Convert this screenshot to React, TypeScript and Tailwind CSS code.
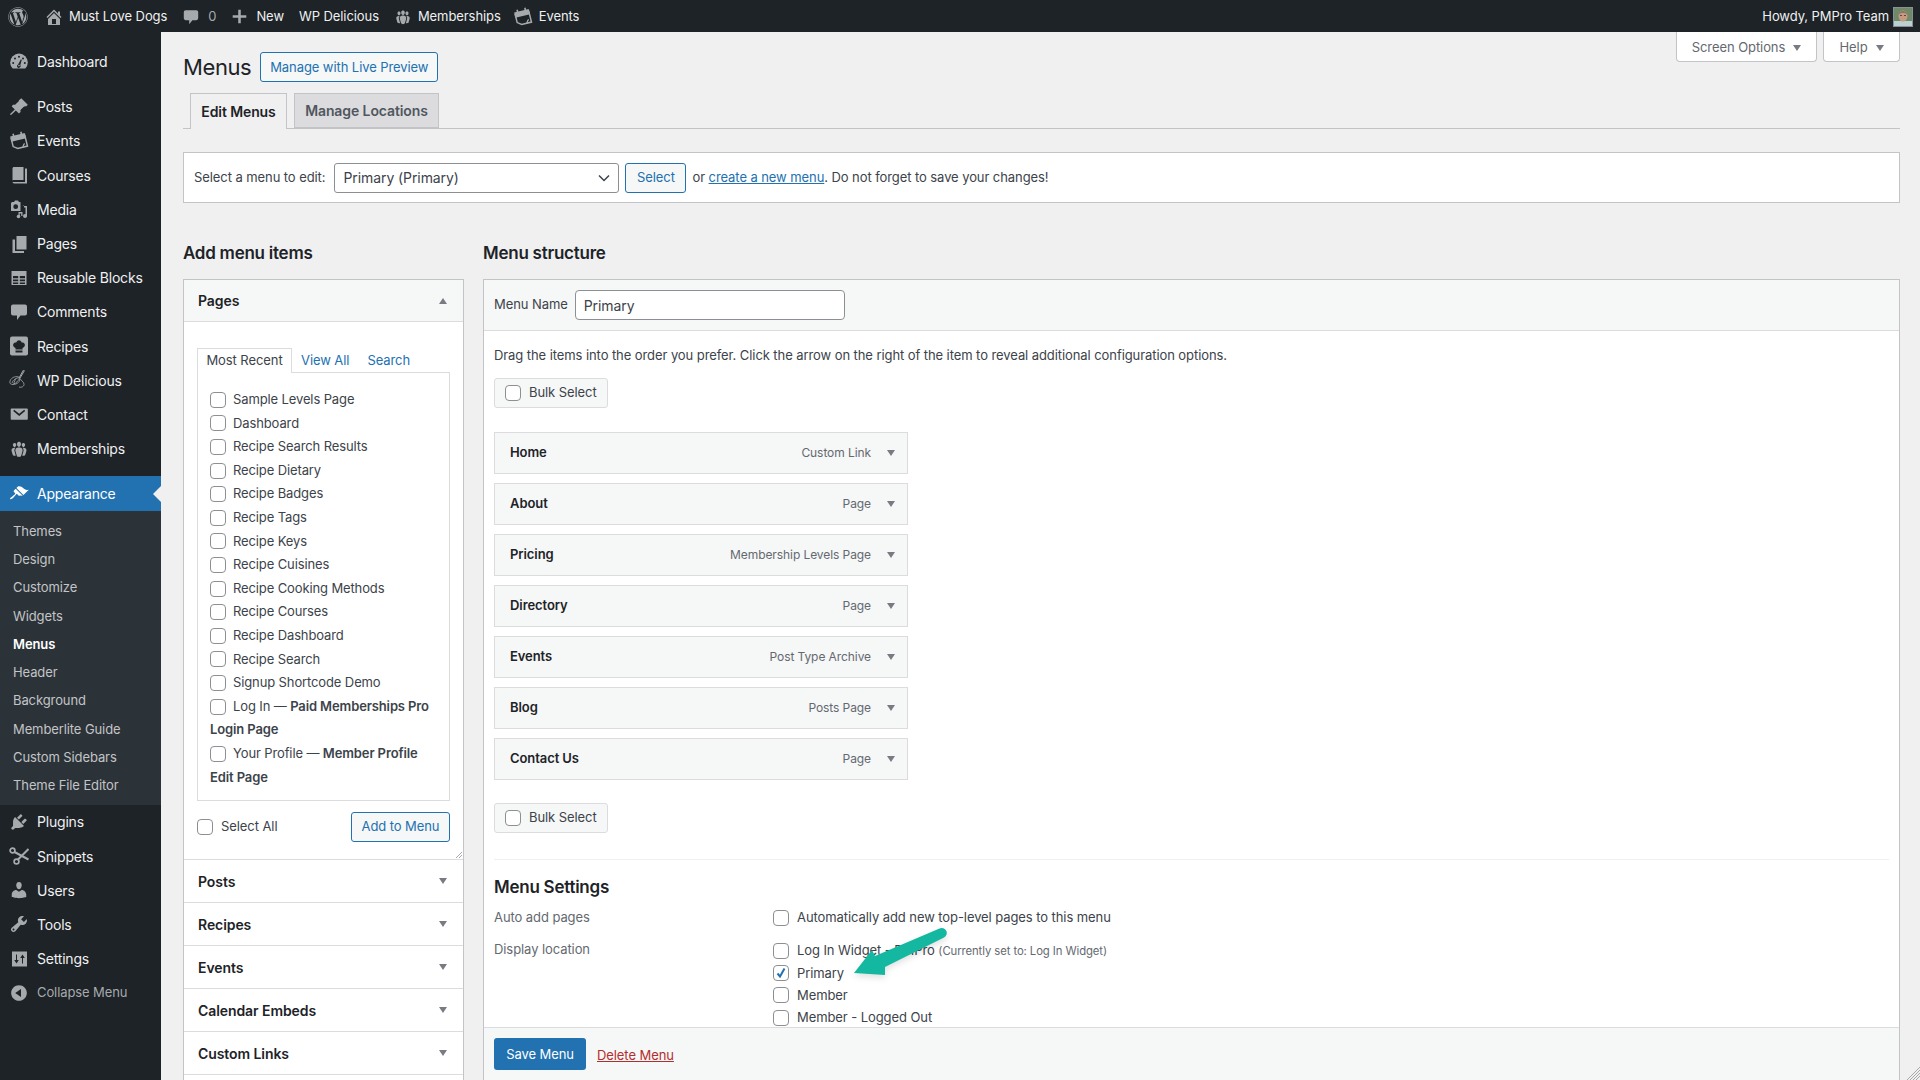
import type { ReactNode } from "react";
import { FaWordpress } from "react-icons/fa";

// dashicon-style paths, 20x20 box
const paths: Record<string, string> = {
  home: "M16 8.5l1.53 1.53-1.06 1.06L10 4.62l-6.47 6.47-1.06-1.06L10 2.5l4 4v-2h2v4zm-6-2.46l6 5.99V18H4v-5.97zM12 17v-5H8v5h4z",
  comment: "M4 2.5h12a2 2 0 0 1 2 2v7a2 2 0 0 1-2 2h-4.5L8 18v-4.5H4a2 2 0 0 1-2-2v-7a2 2 0 0 1 2-2z",
  plus: "M18 8.5v3h-6.5V18h-3v-6.5H2v-3h6.5V2h3v6.5z",
  post: "M10.44 3.02l1.82-1.82 6.54 6.53-1.82 1.82c-.68-.68-1.57-.43-2.17.16l-2.88 2.88c-.6.6-.84 1.49-.16 2.17l-1.82 1.82-3.16-3.16-4.42 4.42-1.25.26.26-1.25 4.42-4.42-3.16-3.16 1.82-1.82c.68.68 1.57.44 2.17-.16l2.88-2.88c.6-.6.84-1.49.16-2.17z",
  book: "M5 2h9.5v13H5c-.8 0-1.5.3-1.5.3V3.5C3.5 2.7 4.2 2 5 2zM16 3.5h2V18.5H5.5c-1 0-2-.8-2-1.6h12.5z",
  page: "M7.5 2h10v13.5h-10zM3.5 5.5h2.5v11.5h9v2H3.5z",
  table: "M2.5 3h15v14h-15zM4 8v2.2h5.2V8zm6.8 0v2.2H16V8zM4 11.4v1.9h5.2v-1.9zm6.8 0v1.9H16v-1.9zM4 14.4V16h5.2v-1.6zm6.8 0V16H16v-1.6z",
  mail: "M2.5 4.5h15.5c.5 0 .8.3.8.8v9.7c0 .5-.3.8-.8.8H2.5c-.5 0-.8-.3-.8-.8V5.3c0-.5.3-.8.8-.8zm1.7 2.4l6 5 6-5-1-1.1-5 4-5-4z",
  groups: "M8.03 4.46c-.29 1.28.55 3.46 1.97 3.46 1.41 0 2.25-2.18 1.96-3.46-.22-.98-1.08-1.63-1.96-1.63-.89 0-1.74.65-1.97 1.63zm-4.13.9c-.25 1.08.47 2.93 1.67 2.93s1.92-1.85 1.67-2.93c-.19-.83-.92-1.39-1.67-1.39s-1.48.56-1.67 1.39zm8.86 0c-.25 1.08.47 2.93 1.66 2.93 1.2 0 1.92-1.85 1.67-2.93-.19-.83-.92-1.39-1.67-1.39-.74 0-1.47.56-1.66 1.39zm-.59 11.43l1.25-4.3C14.2 10 12.71 8.47 10 8.47c-2.72 0-4.21 1.53-3.44 4.02l1.26 4.3C8.05 17.51 9 18 10 18c.98 0 1.94-.49 2.17-1.21zm-6.1-7.63c-.49.67-.96 1.83-.42 3.59l1.12 3.79c-.34.2-.77.31-1.2.31-.85 0-1.65-.41-1.85-1.03l-1.07-3.65c-.65-2.11.61-3.4 2.92-3.4.27 0 .54.02.79.06-.1.1-.2.22-.29.33zm8.35-.39c2.31 0 3.58 1.29 2.92 3.4l-1.07 3.65c-.2.62-1 1.03-1.85 1.03-.43 0-.86-.11-1.2-.31l1.11-3.77c.55-1.78.08-2.94-.42-3.61-.08-.11-.18-.23-.28-.33.25-.04.51-.06.79-.06z",
  brush: "M14.48 11.06L7.41 3.99l1.5-1.5c.5-.56 2.3-.47 3.51.32 1.21.8 1.43 1.28 2.91 2.1 1.18.64 2.45 1.26 4.45.85zm-.71.71L6.7 4.7 4.93 6.47c-.39.39-.39 1.02 0 1.41l1.06 1.06c.39.39.39 1.03 0 1.42-.6.6-1.43 1.11-2.21 1.69-.35.26-.7.53-1.01.84C1.43 13.23.76 14.77 1.2 15.2c.42.43 1.97-.24 3.32-1.59.31-.31.58-.66.84-1.01.58-.78 1.09-1.61 1.69-2.21.39-.39 1.03-.39 1.42 0l1.06 1.06c.39.39 1.02.39 1.41 0z",
  plugin: "M13.11 4.36L9.87 7.6 8 5.73l3.24-3.24c.35-.34 1.05-.2 1.56.32.52.51.66 1.21.31 1.55zm-8 1.77l.91-1.12 9.01 9.01-1.19.84c-.71.71-2.63 1.16-3.82 1.16H6.14L4.9 17.26c-.59.59-1.54.59-2.12 0-.59-.58-.59-1.53 0-2.12l1.24-1.24v-3.88c0-1.13.4-3.19 1.09-3.89zm7.26 3.97l3.24-3.24c.34-.35 1.04-.21 1.55.31.52.51.66 1.21.31 1.55l-3.24 3.25z",
  users: "M10 9.25c-2.27 0-2.73-3.44-2.73-3.44C7 4.02 7.82 2 9.97 2c2.16 0 2.98 2.02 2.71 3.81 0 0-.41 3.44-2.68 3.44zm0 2.57L12.72 10c2.39 0 4.52 2.33 4.52 4.53v2.49s-3.65 1.13-7.24 1.13c-3.65 0-7.24-1.13-7.24-1.13v-2.49c0-2.25 1.94-4.48 4.47-4.48z",
  tools: "M16.68 9.77c-1.34 1.34-3.3 1.67-4.95.99l-5.41 6.52c-.99.99-2.59.99-3.58 0s-.99-2.59 0-3.57l6.52-5.42c-.68-1.65-.35-3.61.99-4.95 1.28-1.28 3.12-1.62 4.72-1.06l-2.89 2.89 2.82 2.82 2.86-2.87c.53 1.58.18 3.39-1.08 4.65zM3.81 16.21c.4.39 1.04.39 1.43 0 .4-.4.4-1.04 0-1.43-.39-.4-1.03-.4-1.43 0-.39.39-.39 1.03 0 1.43z",
  settings: "M3 2.5h15v15H3zM8 11V5.5H7V11H5.2l2.3 3.5L9.8 11zM13.5 5.5L11.2 9H13v5.5h1V9h1.8z",
  collapse: "M10 2.16c4.33 0 7.84 3.51 7.84 7.84s-3.51 7.84-7.84 7.84S2.16 14.33 2.16 10 5.71 2.16 10 2.16zm2 11.72V6.12L6.18 9.97z",
};

function Dash({ name, size = 20 }: { name: string; size?: number }) {
  return (
    <svg width={size} height={size} viewBox="0 0 20 20" fill="currentColor" fillRule="evenodd">
      <path d={paths[name]} />
    </svg>
  );
}

function DashboardIcon() {
  return (
    <svg width="20" height="20" viewBox="0 0 20 20" fill="currentColor">
      <path d="M3.76 16.5h12.48A8.6 8.6 0 0 0 18.8 10.4a8.8 8.8 0 1 0-17.6 0c0 2.4 1 4.5 2.56 6.1z" />
      <g fill="#1d2327">
        <circle cx="4.2" cy="11" r="1" />
        <circle cx="6" cy="6.6" r="1" />
        <circle cx="10" cy="4.8" r="1" />
        <circle cx="14" cy="6.6" r="1" />
        <circle cx="15.8" cy="11" r="1" />
        <path d="M11.8 7.4l1 .4-1.5 5.2a1.8 1.8 0 1 1-2.2-.6z" />
      </g>
      <circle cx="10" cy="13.6" r=".8" />
    </svg>
  );
}

function EventsIcon() {
  return (
    <svg width="20" height="20" viewBox="0 0 20 20">
      <g transform="rotate(-14 10 10)">
        <path d="M3 6h14v11h-10l-4-3z" fill="none" stroke="currentColor" strokeWidth="1.5" />
        <path d="M2.5 3.5h15V9h-15z" fill="currentColor" />
        <path d="M6 1.5v3M14 1.5v3" stroke="currentColor" strokeWidth="1.6" />
        <path d="M12 17c1.5-1 1-3 3-3" stroke="currentColor" strokeWidth="1.3" fill="none" />
      </g>
    </svg>
  );
}

function MediaIcon() {
  return (
    <svg width="20" height="20" viewBox="0 0 20 20" fill="currentColor">
      <path fillRule="evenodd" d="M3 3h2l1-1.5h3L10 3h1.5v9H2V4zm3.7 2.3a2.4 2.4 0 1 0 0 4.8 2.4 2.4 0 0 0 0-4.800z" />
      <path d="M13 7h5v10.500h-1.500V8.500H15V6.500z" />
      <circle cx="16" cy="17" r="2" />
      <path d="M9.500 13h4v4h-1.300v-2.500h-1.500v3.500h-1.200z" />
      <circle cx="9.500" cy="17.500" r="1.800" />
    </svg>
  );
}

function RecipeIcon() {
  return (
    <svg width="20" height="20" viewBox="0 0 20 20">
      <rect x="1" y="0.500" width="18" height="19" rx="2" fill="currentColor" />
      <path d="M6.500 12c-2-.6-2.800-2.400-2.200-4 .5-1.300 1.800-1.800 3-1.500C7.800 5 9 4.300 10 4.300s2.200.7 2.700 2.200c1.200-.3 2.500.2 3 1.500.6 1.600-.2 3.400-2.200 4v1.500h-7z" fill="#1d2327" />
      <path d="M6.500 14.500h7V16.500h-7z" fill="#1d2327" />
    </svg>
  );
}

function WhiskIcon() {
  return (
    <svg width="22" height="22" viewBox="0 0 22 22" fill="none" stroke="currentColor" strokeWidth=".8">
      <path d="M16.500 1.500L12 9M15.500 1l-4.500 8" strokeWidth="1" />
      <path d="M11.500 8.500c-3-2-8-.5-9.500 3.500-.8 2.500.8 3.500 3 3.500 4 0 8-3 6.500-7z" />
      <path d="M11 9c-2-.5-6 1.500-7 5M11.500 9.500c-1 2-3.500 5-6 5.500M8 9.500c-1 1.500-2 3.500-2 5.500M12 9.500c1 2 3.500 3 4 5.500 .3 2-2 4-5 3" />
    </svg>
  );
}

function ScissorsIcon() {
  return (
    <svg width="20" height="20" viewBox="0 0 20 20" fill="none" stroke="currentColor">
      <circle cx="3.500" cy="4.500" r="2.400" strokeWidth="1.700" />
      <circle cx="7.500" cy="15.500" r="2.400" strokeWidth="1.700" />
      <path d="M5.500 6l14 7.500M9 13.500L19.500 3" strokeWidth="2" />
    </svg>
  );
}

function AvatarImage() {
  return (
    <svg width="18" height="18" viewBox="0 0 18 18">
      <rect width="18" height="18" fill="#6f8a68" />
      <rect y="13" width="18" height="5" fill="#bcd0d4" />
      <ellipse cx="9" cy="8" rx="4.500" ry="5.500" fill="#c59a80" />
      <path d="M4.500 7c.5-3 2.500-4 4.500-4s4 1 4.500 4c-1-1.500-2-2-4.500-2s-3.500.5-4.500 2z" fill="#8b7463" />
      <rect x="6" y="7" width="2" height="1" fill="#5b4a42" />
      <rect x="10" y="7" width="2" height="1" fill="#5b4a42" />
    </svg>
  );
}

function Caret({ up = false, className = "" }: { up?: boolean; className?: string }) {
  return (
    <svg width="8" height="6" viewBox="0 0 8 6" fill="currentColor" className={className}>
      <path d={up ? "M0 6L4 0l4 6z" : "M0 0h8L4 6z"} />
    </svg>
  );
}

function Check({ checked = false }: { checked?: boolean }) {
  return (
    <span className="flex h-4 w-4 shrink-0 items-center justify-center rounded-[4px] border border-[#8c8f94] bg-white">
      {checked && (
        <svg width="12" height="12" viewBox="0 0 12 12" fill="none" stroke="#2271b1" strokeWidth="2">
          <path d="M2.500 6.500L5 9.500l4.500-8" />
        </svg>
      )}
    </span>
  );
}

const topNav: { label: string; icon: ReactNode }[] = [
  { label: "Posts", icon: <Dash name="post" /> },
  { label: "Events", icon: <EventsIcon /> },
  { label: "Courses", icon: <Dash name="book" /> },
  { label: "Media", icon: <MediaIcon /> },
  { label: "Pages", icon: <Dash name="page" /> },
  { label: "Reusable Blocks", icon: <Dash name="table" /> },
  { label: "Comments", icon: <Dash name="comment" /> },
  { label: "Recipes", icon: <RecipeIcon /> },
  { label: "WP Delicious", icon: <WhiskIcon /> },
  { label: "Contact", icon: <Dash name="mail" /> },
  { label: "Memberships", icon: <Dash name="groups" /> },
];

const subNav = [
  "Themes",
  "Design",
  "Customize",
  "Widgets",
  "Menus",
  "Header",
  "Background",
  "Memberlite Guide",
  "Custom Sidebars",
  "Theme File Editor",
];

const bottomNav: { label: string; icon: ReactNode }[] = [
  { label: "Plugins", icon: <Dash name="plugin" /> },
  { label: "Snippets", icon: <ScissorsIcon /> },
  { label: "Users", icon: <Dash name="users" /> },
  { label: "Tools", icon: <Dash name="tools" /> },
  { label: "Settings", icon: <Dash name="settings" /> },
];

const pageRows = [
  "Sample Levels Page",
  "Dashboard",
  "Recipe Search Results",
  "Recipe Dietary",
  "Recipe Badges",
  "Recipe Tags",
  "Recipe Keys",
  "Recipe Cuisines",
  "Recipe Cooking Methods",
  "Recipe Courses",
  "Recipe Dashboard",
  "Recipe Search",
  "Signup Shortcode Demo",
];

const menuItems = [
  ["Home", "Custom Link"],
  ["About", "Page"],
  ["Pricing", "Membership Levels Page"],
  ["Directory", "Page"],
  ["Events", "Post Type Archive"],
  ["Blog", "Posts Page"],
  ["Contact Us", "Page"],
];

const closedBoxes = ["Posts", "Recipes", "Events", "Calendar Embeds", "Custom Links"];

function NavRow({ label, icon }: { label: string; icon: ReactNode }) {
  return (
    <div className="flex h-[34.2px] items-center pb-[1px] text-[14px] tracking-[-0.2px] text-[#f0f0f1]">
      <span className="flex w-[37px] items-center justify-center pl-[1px] text-[#a7aaad]">{icon}</span>
      {label}
    </div>
  );
}

function BulkSelect() {
  return (
    <div className="flex h-[30px] w-[114px] items-center gap-[8px] rounded-[3px] border border-[#dcdcde] bg-[#f6f7f7] pl-[10px] text-[13px]">
      <Check />
      Bulk Select
    </div>
  );
}

export default function App() {
  return (
    <div className="relative flex h-[1080px] w-[1920px] flex-col overflow-hidden bg-[#f0f0f1] text-[13px] tracking-[-0.08px] text-[#3c434a] [font-family:Inter,sans-serif]">
      {/* admin bar */}
      <div className="flex h-8 shrink-0 items-center bg-[#1d2327] pt-[1px] text-[13px] text-[#f0f0f1]">
        <span className="ml-[8px] text-[#a7aaad]">
          <FaWordpress size={20} />
        </span>
        <span className="ml-[16px] text-[#a7aaad]">
          <Dash name="home" />
        </span>
        <span className="ml-[5px]">Must Love Dogs</span>
        <span className="ml-[15px] text-[#a7aaad]">
          <Dash name="comment" size={18} />
        </span>
        <span className="ml-[8px] text-[#a7aaad]">0</span>
        <span className="ml-[15px] text-[#a7aaad]">
          <Dash name="plus" size={17} />
        </span>
        <span className="ml-[8px]">New</span>
        <span className="ml-[15px]">WP Delicious</span>
        <span className="ml-[15px] text-[#a7aaad]">
          <Dash name="groups" size={18} />
        </span>
        <span className="ml-[6px]">Memberships</span>
        <span className="ml-[12px] text-[#a7aaad]">
          <EventsIcon />
        </span>
        <span className="ml-[6px]">Events</span>
        <span className="ml-auto">Howdy, PMPro Team</span>
        <span className="ml-[4px] mr-[7px] border border-[#8c8f94]">
          <AvatarImage />
        </span>
      </div>

      <div className="flex min-h-0 flex-1">
        {/* sidebar */}
        <div className="w-[161px] shrink-0 bg-[#1d2327] pt-[13px]">
          <NavRow label="Dashboard" icon={<DashboardIcon />} />
          <div className="h-[11px]" />
          {topNav.map((item) => (
            <NavRow key={item.label} label={item.label} icon={item.icon} />
          ))}
          <div className="relative mt-[10px] flex h-[35px] items-center bg-[#2271b1] text-[14px] tracking-[-0.2px] text-white">
            <span className="flex w-[37px] items-center justify-center pl-[1px]">
              <Dash name="brush" />
            </span>
            Appearance
            <span className="absolute right-0 top-[10px] h-0 w-0 border-y-[8px] border-r-[8px] border-y-transparent border-r-[#f0f0f1]" />
          </div>
          <div className="h-[294px] bg-[#2c3338] pt-[6px] text-[13px] tracking-[-0.1px] text-[#c3c4c7]">
            {subNav.map((label) => (
              <div
                key={label}
                className={`flex h-[28.3px] items-center pl-[13px] ${label === "Menus" ? "font-semibold text-white" : ""}`}
              >
                {label}
              </div>
            ))}
          </div>
          {bottomNav.map((item) => (
            <NavRow key={item.label} label={item.label} icon={item.icon} />
          ))}
          <div className="flex h-[34.2px] items-center pb-[1px] text-[13px] tracking-[-0.1px] text-[#a7aaad]">
            <span className="flex w-[37px] items-center justify-center pl-[1px]">
              <Dash name="collapse" />
            </span>
            Collapse Menu
          </div>
        </div>

        {/* main */}
        <div className="flex min-w-0 flex-1 flex-col pl-[22px] pr-[20px]">
          <div className="flex h-[61px] shrink-0 items-start justify-between">
            <div className="mt-[20px] flex items-center gap-[9px]">
              <h1 className="text-[22px] leading-[30px] tracking-[-0.4px] text-[#1d2327]">Menus</h1>
              <span className="flex h-[30px] w-[178px] items-center justify-center rounded-[3px] border border-[#2271b1] bg-[#f6f7f7] pt-[1px] text-[13px] text-[#2271b1]">
                Manage with Live Preview
              </span>
            </div>
            <div className="flex gap-[6px] text-[13px] text-[#646970]">
              <span className="flex h-[30px] w-[141px] items-center justify-center gap-[8px] rounded-b-[4px] border border-t-0 border-[#c3c4c7] bg-white pt-[2px]">
                Screen Options <Caret className="text-[#787c82]" />
              </span>
              <span className="flex h-[30px] w-[77px] items-center justify-center gap-[8px] rounded-b-[4px] border border-t-0 border-[#c3c4c7] bg-white pt-[2px]">
                Help <Caret className="text-[#787c82]" />
              </span>
            </div>
          </div>

          <div className="flex h-[36px] shrink-0 gap-[7px] border-b border-[#c3c4c7] pl-[7px] text-[14px] font-semibold tracking-[-0.1px]">
            <span className="flex h-[36px] w-[97px] items-center justify-center border border-b-0 border-[#c3c4c7] bg-[#f0f0f1] text-[#1d2327]">
              Edit Menus
            </span>
            <span className="flex h-[35px] w-[145px] items-center justify-center border border-[#c3c4c7] bg-[#dcdcde] text-[#50575e]">
              Manage Locations
            </span>
          </div>

          <div className="mt-[23px] flex h-[51px] shrink-0 items-center border border-[#c3c4c7] bg-white pl-[10px]">
            <span className="pt-[1px]">Select a menu to edit:</span>
            <span className="ml-[9px] flex h-[30px] w-[285px] items-center justify-between rounded-[3px] border border-[#8c8f94] bg-white pl-[8px] pr-[8px] text-[14px]">
              Primary (Primary)
              <svg width="12" height="8" viewBox="0 0 12 8" fill="none" stroke="#3c434a" strokeWidth="1.500">
                <path d="M1 1.500l5 5 5-5" />
              </svg>
            </span>
            <span className="ml-[6px] flex h-[30px] w-[61px] items-center justify-center rounded-[3px] border border-[#2271b1] bg-[#f6f7f7] text-[#2271b1]">
              Select
            </span>
            <span className="ml-[6px] pt-[1px]">
              or <span className="text-[#2271b1] underline">create a new menu</span>. Do not forget to save your changes!
            </span>
          </div>

          <div className="flex min-h-0 flex-1">
            {/* add items */}
            <div className="w-[281px] shrink-0">
              <h2 className="h-[76px] pt-[36px] text-[17px] font-semibold leading-[28px] tracking-[-0.25px] text-[#1d2327]">Add menu items</h2>
              <div className="border-x border-t border-[#c3c4c7] bg-white">
                <div className="flex h-[42px] items-center justify-between border-b border-[#dcdcde] bg-[#f6f7f7] pl-[14px] pr-[16px] text-[14px] font-semibold text-[#1d2327]">
                  Pages
                  <Caret up className="text-[#787c82]" />
                </div>
                <div className="relative h-[537px] px-[13px] pt-[26px]">
                  <div className="flex h-[25px] items-center gap-[19px]">
                    <span className="relative z-10 flex h-[25px] w-[95px] items-center justify-center border border-b-0 border-[#dcdcde] bg-white">
                      Most Recent
                    </span>
                    <span className="-ml-[10px] text-[#2271b1]">View All</span>
                    <span className="-ml-[1px] text-[#2271b1]">Search</span>
                  </div>
                  <div className="-mt-[1px] h-[429px] w-[253px] border border-[#dcdcde] pl-[12px] pt-[15px] tracking-[-0.12px]">
                    {pageRows.map((row) => (
                      <div key={row} className="flex h-[23.6px] items-center gap-[7px]">
                        <Check />
                        {row}
                      </div>
                    ))}
                    <div className="flex h-[23.6px] items-center gap-[7px]">
                      <Check />
                      <span>
                        Log In — <span className="font-semibold">Paid Memberships Pro</span>
                      </span>
                    </div>
                    <div className="flex h-[23.6px] items-center font-semibold">Login Page</div>
                    <div className="flex h-[23.6px] items-center gap-[7px]">
                      <Check />
                      <span>
                        Your Profile — <span className="font-semibold">Member Profile</span>
                      </span>
                    </div>
                    <div className="flex h-[23.6px] items-center font-semibold">Edit Page</div>
                  </div>
                  <div className="mt-[11px] flex h-[30px] w-[253px] items-center justify-between">
                    <span className="flex items-center gap-[8px]">
                      <Check />
                      Select All
                    </span>
                    <span className="flex h-[30px] w-[99px] items-center justify-center rounded-[3px] border border-[#2271b1] bg-[#f6f7f7] text-[#2271b1]">
                      Add to Menu
                    </span>
                  </div>
                  <svg width="6" height="6" viewBox="0 0 6 6" stroke="#a7aaad" className="absolute bottom-[1px] right-[1px]">
                    <path d="M0 6l6-6M3 6l3-3" />
                  </svg>
                </div>
                {closedBoxes.map((title) => (
                  <div
                    key={title}
                    className="flex h-[43px] items-center justify-between border-t border-[#dcdcde] pl-[14px] pr-[16px] text-[14px] font-semibold text-[#1d2327]"
                  >
                    {title}
                    <Caret className="text-[#787c82]" />
                  </div>
                ))}
                <div className="h-[43px] border-t border-[#dcdcde]" />
              </div>
            </div>

            {/* structure */}
            <div className="ml-[19px] flex min-w-0 flex-1 flex-col">
              <h2 className="h-[76px] shrink-0 pt-[36px] text-[17px] font-semibold leading-[28px] tracking-[-0.25px] text-[#1d2327]">Menu structure</h2>
              <div className="flex min-h-0 flex-1 flex-col border-x border-t border-[#c3c4c7] bg-white">
                <div className="flex h-[51px] shrink-0 items-center gap-[7px] border-b border-[#dcdcde] bg-[#f6f7f7] pl-[10px]">
                  Menu Name
                  <span className="flex h-[30px] w-[270px] items-center rounded-[4px] border border-[#8c8f94] bg-white pl-[8px] text-[14px]">
                    Primary
                  </span>
                </div>
                <div className="min-h-0 flex-1 overflow-hidden px-[10px] pt-[14px]">
                  <p className="h-[20px] leading-[20px]">
                    Drag the items into the order you prefer. Click the arrow on the right of the item to reveal additional configuration options.
                  </p>
                  <div className="mt-[13px]">
                    <BulkSelect />
                  </div>
                  <div className="mt-[24px] flex flex-col gap-[9px]">
                    {menuItems.map(([title, type]) => (
                      <div
                        key={title}
                        className="flex h-[42px] w-[414px] items-center border border-[#dcdcde] bg-[#f6f7f7] pl-[15px] pr-[12px]"
                      >
                        <span className="font-semibold text-[#1d2327]">{title}</span>
                        <span className="ml-auto text-[12px] text-[#646970]">{type}</span>
                        <Caret className="ml-[16px] text-[#787c82]" />
                      </div>
                    ))}
                  </div>
                  <div className="mt-[23px]">
                    <BulkSelect />
                  </div>
                  <div className="mt-[26px] border-t border-[#f0f0f1]" />
                  <h3 className="mt-[13px] text-[17px] font-semibold leading-[28px] tracking-[-0.25px] text-[#1d2327]">Menu Settings</h3>
                  <div className="mt-[7px] grid grid-cols-[279px_1fr]">
                    <span className="h-[20px] leading-[19px] text-[#646970]">Auto add pages</span>
                    <span className="flex h-[20px] items-center gap-[8px]">
                      <Check />
                      Automatically add new top-level pages to this menu
                    </span>
                    <span className="mt-[12px] text-[#646970]">Display location</span>
                    <div className="mt-[11px] flex flex-col">
                      <span className="flex h-[23.2px] items-center gap-[8px]">
                        <Check />
                        <span>
                          Log In Widget - PMPro <span className="text-[11.3px] text-[#646970]">(Currently set to: Log In Widget)</span>
                        </span>
                      </span>
                      <span className="flex h-[22.2px] items-center gap-[8px]">
                        <Check checked />
                        Primary
                      </span>
                      <span className="flex h-[22.2px] items-center gap-[8px]">
                        <Check />
                        Member
                      </span>
                      <span className="flex h-[22px] items-center gap-[8px]">
                        <Check />
                        Member - Logged Out
                      </span>
                    </div>
                  </div>
                </div>
                <div className="flex h-[53px] shrink-0 items-start border-t border-[#dcdcde] bg-[#f6f7f7] pl-[10px] pt-[10px]">
                  <span className="flex h-[32px] w-[92px] items-center justify-center rounded-[3px] bg-[#2271b1] pt-[1px] text-white">Save Menu</span>
                  <span className="ml-[11px] mt-[8px] text-[#b32d2e] underline">Delete Menu</span>
                </div>
              </div>
            </div>
          </div>
        </div>
      </div>

      {/* annotation arrow */}
      <svg width="100" height="60" viewBox="0 0 100 60" className="absolute left-[850px] top-[925px] drop-shadow-md">
        <path d="M4 48L22 25l3 6L89.500 3.500a5 5 0 0 1 4.500 9L35 42v8z" fill="#14b8a0" />
      </svg>

      {/* textarea-style grip */}
      <svg width="13" height="13" viewBox="0 0 13 13" stroke="#a7aaad" className="absolute bottom-0 right-0">
        <path d="M0 13L13 0M3 13L13 3M6 13l7-7M9 13l4-4" />
      </svg>
    </div>
  );
}
